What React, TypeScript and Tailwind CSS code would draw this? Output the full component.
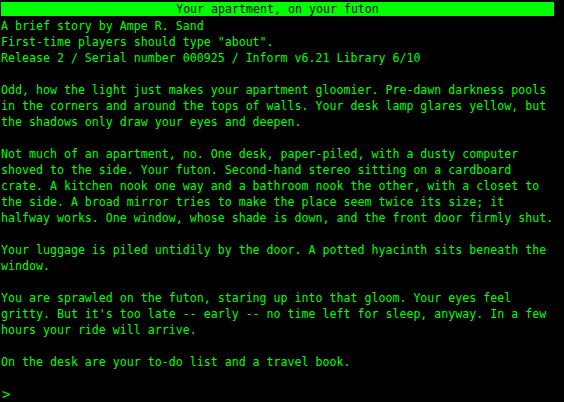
const header = [
  "A brief story by Ampe R. Sand",
  'First-time players should type "about".',
  "Release 2 / Serial number 000925 / Inform v6.21 Library 6/10",
];

const paragraphs = [
  "Odd, how the light just makes your apartment gloomier. Pre-dawn darkness pools in the corners and around the tops of walls. Your desk lamp glares yellow, but the shadows only draw your eyes and deepen.",
  "Not much of an apartment, no. One desk, paper-piled, with a dusty computer shoved to the side. Your futon. Second-hand stereo sitting on a cardboard crate. A kitchen nook one way and a bathroom nook the other, with a closet to the side. A broad mirror tries to make the place seem twice its size; it halfway works. One window, whose shade is down, and the front door firmly shut.",
  "Your luggage is piled untidily by the door. A potted hyacinth sits beneath the window.",
  "You are sprawled on the futon, staring up into that gloom. Your eyes feel gritty. But it's too late -- early -- no time left for sleep, anyway. In a few hours your ride will arrive.",
  "On the desk are your to-do list and a travel book.",
];

const App = () => {
  return (
    <div className="h-[402px] w-[564px] overflow-hidden bg-black pl-[1px] pt-[2px] font-['DejaVu_Sans_Mono',monospace] text-[11.62px] leading-[16px] text-[#00ff00]">
      
      <div className="flex h-[14px] w-[553px] items-center justify-center bg-[#00ff00] text-black">
        Your apartment, on your futon
      </div>

      <div className="mt-[2px] w-[556px]">
        <div className="mb-4">
          {header.map((line) => (
            <div key={line}>{line}</div>
          ))}
        </div>

        {paragraphs.map((text) => (
          <p key={text.slice(0, 12)} className="mb-4">
            {text}
          </p>
        ))}

        <div className="pl-[1px] text-[14px]">&gt;</div>
      </div>
    </div>
  );
};

export default App;
